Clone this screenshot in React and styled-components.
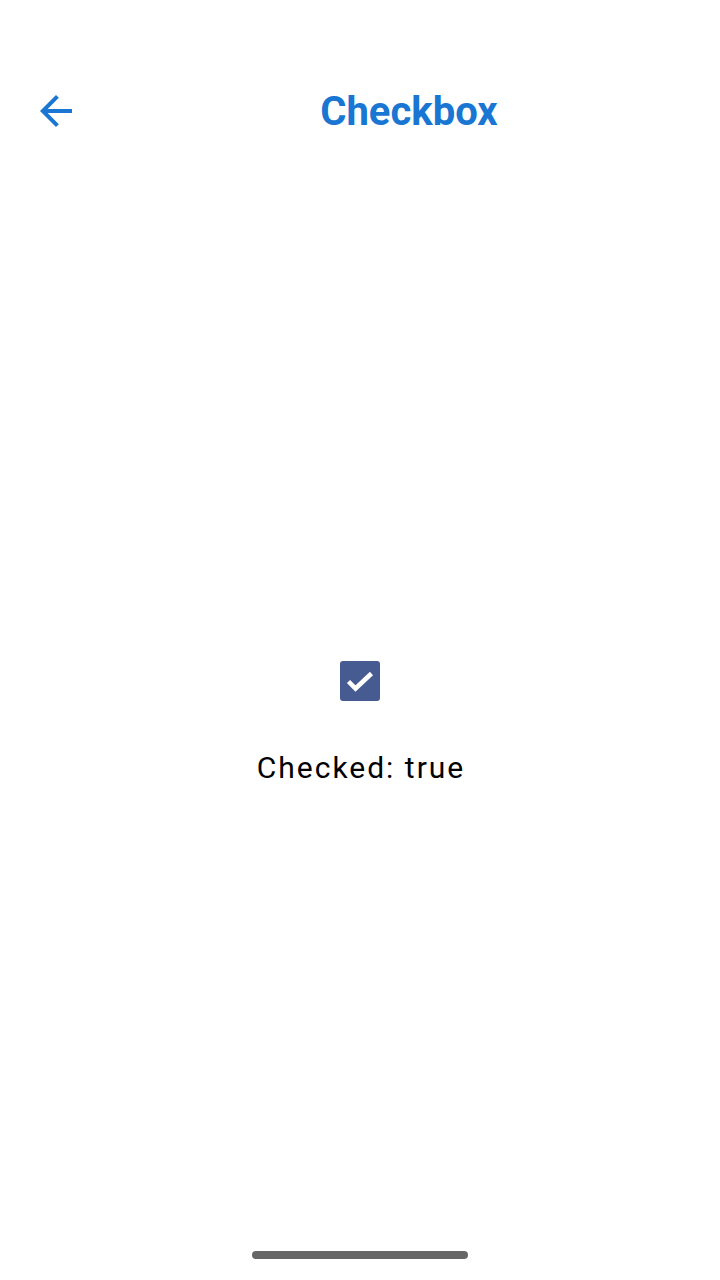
import React, { useState } from 'react';
import styled, { createGlobalStyle } from 'styled-components';

const GlobalStyle = createGlobalStyle`
  html, body {
    margin: 0;
    padding: 0;
    background: #ffffff;
  }
  body {
    font-family: Roboto, "Noto Sans", sans-serif;
  }
`;

const Screen = styled.div`
  position: relative;
  width: 720px;
  height: 1280px;
  display: flex;
  flex-direction: column;
  background: #ffffff;
  overflow: hidden;
`;

const Header = styled.header`
  height: 160px;
  padding-top: 62px;
  box-sizing: border-box;
`;

const Toolbar = styled.div`
  height: 98px;
  display: flex;
  align-items: center;
`;

const NavButton = styled.button`
  width: 98px;
  height: 98px;
  padding: 0 0 0 32px;
  border: none;
  background: none;
  display: flex;
  align-items: center;
  cursor: pointer;
  color: #1976d2;
`;

const Title = styled.h1`
  flex: 1;
  margin: 0;
  text-align: center;
  font-family: Roboto, sans-serif;
  font-weight: 700;
  font-size: 40px;
  color: #1976d2;
`;

const Content = styled.main`
  flex: 1;
  padding-top: 8px;
  display: flex;
  flex-direction: column;
  align-items: center;
  justify-content: center;
  gap: 47px;
`;

const Box = styled.button`
  width: 40px;
  height: 40px;
  padding: 0;
  border: none;
  border-radius: 3px;
  background: ${p => (p.checked ? '#475b93' : 'transparent')};
  box-shadow: ${p => (p.checked ? 'none' : 'inset 0 0 0 3px #475b93')};
  display: block;
  cursor: pointer;
`;

const Label = styled.p`
  margin: 0 0 0 2px;
  font-family: Roboto, sans-serif;
  font-size: 30px;
  line-height: 40px;
  letter-spacing: 2px;
  color: #000000;
`;

const HomeBar = styled.div`
  position: absolute;
  left: 252px;
  bottom: 21px;
  width: 216px;
  height: 8px;
  border-radius: 4px;
  background: #666666;
`;

const BackArrow = () => (
  <svg width="48" height="48" viewBox="0 0 24 24" fill="currentColor">
    <path d="M20 11H7.83l5.59-5.59L12 4l-8 8 8 8 1.41-1.41L7.83 13H20v-2z" />
  </svg>
);

const Check = () => (
  <svg width="40" height="40" viewBox="0 0 40 40" fill="none">
    <polyline
      points="8.5,20.5 15.5,27.5 31.5,12.5"
      stroke="#ffffff"
      strokeWidth="4.5"
    />
  </svg>
);

const App = () => {
  const [checked, setChecked] = useState(true);

  return (
    <Screen>
      <GlobalStyle />
      <Header>
        <Toolbar>
          <NavButton aria-label="Back">
            <BackArrow />
          </NavButton>
          <Title>Checkbox</Title>
        </Toolbar>
      </Header>
      <Content>
        <Box checked={checked} onClick={() => setChecked(!checked)}>
          {checked && <Check />}
        </Box>
        <Label>Checked: {checked ? 'true' : 'false'}</Label>
      </Content>
      <HomeBar />
    </Screen>
  );
};

export default App;
